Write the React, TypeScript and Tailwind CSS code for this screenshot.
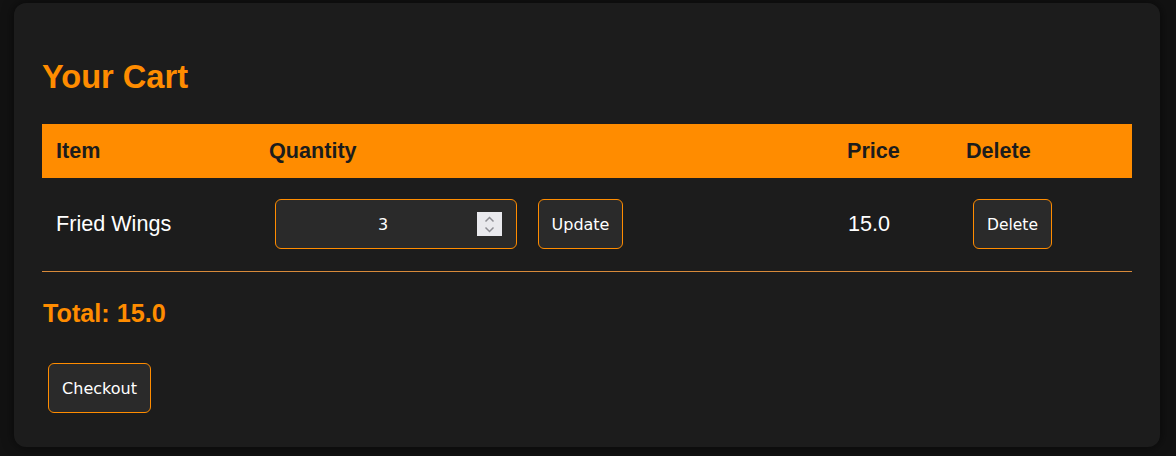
const items = [{ name: "Fried Wings", qty: 3, price: "15.0" }];

const Spinner = () => (
  <div className="absolute right-[14px] top-[12px] w-[25px] h-[24px] bg-[#e9e9ed] flex flex-col items-center justify-center gap-[3px]">
    <svg width="11" height="7" viewBox="0 0 11 7" fill="none">
      <path d="M1.5 5.5 L5.5 1.5 L9.5 5.5" stroke="#8d8d93" strokeWidth="1.5" />
    </svg>
    <svg width="11" height="7" viewBox="0 0 11 7" fill="none">
      <path d="M1.5 1.5 L5.5 5.5 L9.5 1.5" stroke="#8d8d93" strokeWidth="1.5" />
    </svg>
  </div>
);

export default function App() {
  return (
    <div className="min-h-screen bg-[#121212] pt-[3px] pl-[14px] font-['Liberation_Sans',Arial,sans-serif]">
      <div className="w-[1146px] rounded-[12px] bg-[#1c1c1c] px-[28px] pt-[56px] pb-[34px] shadow-[0_0_12px_rgba(0,0,0,0.6)]">
        {/* Title */}
        <h1 className="text-[32.6px] leading-[36px] font-bold text-[#ff8c00]">Your Cart</h1>

        {/* Cart table */}
        <table className="mt-[29px] w-[1090px] border-collapse table-fixed">
          <colgroup>
            <col className="w-[213px]" />
            <col className="w-[578px]" />
            <col className="w-[119px]" />
            <col className="w-[180px]" />
          </colgroup>
          <thead>
            <tr className="bg-[#ff8c00] h-[54px] text-[#1c1c1c] text-[21.6px] font-bold text-left">
              <th className="px-[14px]">Item</th>
              <th className="px-[14px]">Quantity</th>
              <th className="px-[14px]">Price</th>
              <th className="px-[14px]">Delete</th>
            </tr>
          </thead>
          <tbody>
            {items.map((item, index) => (
              <tr key={index} className="h-[93px] border-b border-[#d88a3a] text-white text-[21.6px]">
                <td className="px-[14px]">{item.name}</td>
                <td className="px-[14px]">
                  <div className="flex items-center gap-[21px] pl-[6px]">
                    <div className="relative w-[242px] h-[50px] rounded-[6px] border border-[#ff8c00] bg-[#2a2a2a] pl-[13px] pr-[39px] pt-[2px] flex items-center justify-center font-['DejaVu_Sans',sans-serif] text-[16px] text-white">
                      {item.qty}
                      <Spinner />
                    </div>
                    <button className="h-[50px] w-[85px] pt-[2px] rounded-[6px] border border-[#ff8c00] bg-[#2a2a2a] font-['DejaVu_Sans',sans-serif] text-[16px] text-white">
                      Update
                    </button>
                  </div>
                </td>
                <td className="px-[14px] pl-[15px]">{item.price}</td>
                <td className="px-[14px]">
                  <button className="ml-[7px] h-[50px] w-[79px] pt-[2px] rounded-[6px] border border-[#ff8c00] bg-[#2a2a2a] font-['DejaVu_Sans',sans-serif] text-[15.5px] text-white">
                    Delete
                  </button>
                </td>
              </tr>
            ))}
          </tbody>
        </table>

        {/* Total */}
        <h3 className="mt-[27px] ml-px text-[25.2px] leading-[28px] font-bold text-[#ff8c00]">Total: 15.0</h3>

        <button className="mt-[36px] ml-[6px] h-[50px] w-[103px] pt-[2px] rounded-[6px] border border-[#ff8c00] bg-[#2a2a2a] font-['DejaVu_Sans',sans-serif] text-[16px] text-white">
          Checkout
        </button>
      </div>
    </div>
  );
}
